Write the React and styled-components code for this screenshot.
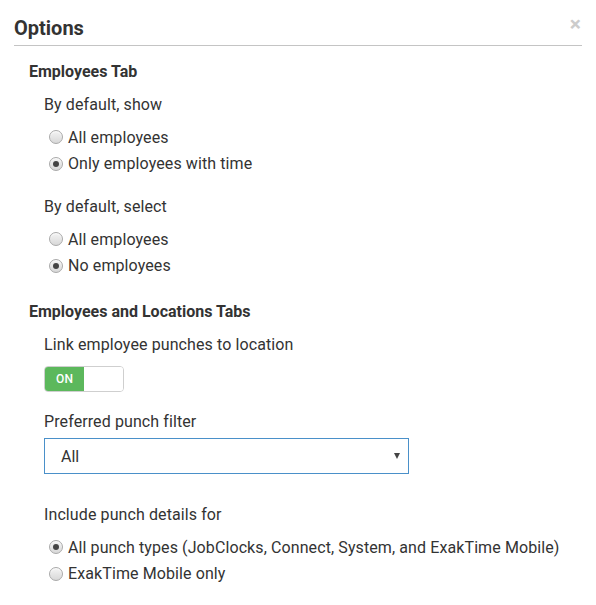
import React, { useState } from "react";
import styled, { createGlobalStyle } from "styled-components";

const GlobalStyle = createGlobalStyle`
  body {
    margin: 0;
    background: #fff;
    font-family: Roboto, "Liberation Sans", Arial, sans-serif;
    color: #333;
  }
`;

export default function App() {
  const [show, setShow] = useState("time");
  const [select, setSelect] = useState("none");
  const [details, setDetails] = useState("all");
  const [link, setLink] = useState(true);

  return (
    <>
      <GlobalStyle />
      <Modal>
        <Header>
          <Title>Options</Title>
          <Close aria-label="Close">×</Close>
        </Header>

        <SectionTitle>Employees Tab</SectionTitle>
        <Group>
          <Label>By default, show</Label>
          <RadioList>
            <RadioOption label="All employees" checked={show === "all"} onChange={() => setShow("all")} />
            <RadioOption label="Only employees with time" checked={show === "time"} onChange={() => setShow("time")} />
          </RadioList>
        </Group>
        <Group spaced>
          <Label>By default, select</Label>
          <RadioList>
            <RadioOption label="All employees" checked={select === "all"} onChange={() => setSelect("all")} />
            <RadioOption label="No employees" checked={select === "none"} onChange={() => setSelect("none")} />
          </RadioList>
        </Group>

        <SectionTitle spaced>Employees and Locations Tabs</SectionTitle>
        <Group>
          <Label>Link employee punches to location</Label>
          <Toggle onClick={() => setLink(!link)}>
            <ToggleOn $active={link}>{link ? "ON" : ""}</ToggleOn>
            <ToggleOff $active={!link}>{link ? "" : "OFF"}</ToggleOff>
          </Toggle>
        </Group>
        <Group spaced>
          <Label>Preferred punch filter</Label>
          <SelectBox>
            <span>All</span>
            <Caret />
          </SelectBox>
        </Group>
        <Group wide>
          <Label>Include punch details for</Label>
          <RadioList>
            <RadioOption
              label="All punch types (JobClocks, Connect, System, and ExakTime Mobile)"
              checked={details === "all"}
              onChange={() => setDetails("all")}
            />
            <RadioOption label="ExakTime Mobile only" checked={details === "mobile"} onChange={() => setDetails("mobile")} />
          </RadioList>
        </Group>
      </Modal>
    </>
  );
}

function RadioOption({ label, checked, onChange }) {
  return (
    <RadioRow onClick={onChange}>
      <RadioDot $checked={checked} />
      {label}
    </RadioRow>
  );
}

const Modal = styled.div`
  padding: 16px 14px 20px 14px;
  width: 568px;
`;

const Header = styled.div`
  display: flex;
  align-items: center;
  justify-content: space-between;
  border-bottom: 1px solid #c4c4c4;
  padding-bottom: 5px;
`;

const Title = styled.h2`
  margin: 0;
  font-size: 20px;
  font-weight: 700;
  line-height: 24px;
  color: #333;
`;

const Close = styled.span`
  font-size: 21px;
  font-weight: 700;
  line-height: 20px;
  color: #cccccc;
  margin-top: -9px;
  margin-right: 1px;
  cursor: pointer;
`;

const SectionTitle = styled.h3`
  margin: ${(p) => (p.spaced ? "23px" : "16px")} 0 0 15px;
  font-size: 16px;
  font-weight: 700;
  line-height: 20px;
`;

const Group = styled.div`
  margin: ${(p) => (p.wide ? "31px" : p.spaced ? "20px" : "13px")} 0 0 30px;
  display: flex;
  flex-direction: column;
  align-items: flex-start;
`;

const Label = styled.div`
  font-size: 16px;
  line-height: 20px;
  letter-spacing: 0.1px;
`;

const RadioList = styled.div`
  margin-top: 9px;
  display: flex;
  flex-direction: column;
`;

const RadioRow = styled.label`
  display: flex;
  align-items: center;
  gap: 5px;
  height: 26.5px;
  padding-left: 5px;
  font-size: 16px;
  letter-spacing: 0.1px;
  cursor: pointer;
`;

const RadioDot = styled.span`
  width: 12px;
  height: 12px;
  border-radius: 50%;
  border: 1px solid #a9a9a9;
  background: linear-gradient(#f4f4f4, #d8d8d8);
  box-shadow: inset 0 1px 1px rgba(255, 255, 255, 0.8);
  position: relative;
  flex: none;

  &::after {
    content: "";
    display: ${(p) => (p.$checked ? "block" : "none")};
    position: absolute;
    left: 3px;
    top: 3px;
    width: 6px;
    height: 6px;
    border-radius: 50%;
    background: #444;
  }
`;

const Toggle = styled.div`
  margin-top: 11px;
  display: flex;
  width: 78px;
  height: 24px;
  border: 1px solid #cfcfcf;
  border-radius: 4px;
  overflow: hidden;
  cursor: pointer;
`;

const ToggleOn = styled.span`
  width: 39px;
  display: flex;
  align-items: center;
  justify-content: center;
  font-size: 12px;
  font-weight: 500;
  color: #fff;
  background: ${(p) => (p.$active ? "#5cb85c" : "#fff")};
`;

const ToggleOff = styled.span`
  flex: 1;
  display: flex;
  align-items: center;
  justify-content: center;
  font-size: 12px;
  color: #555;
  background: ${(p) => (p.$active ? "#e6e6e6" : "#fff")};
`;

const SelectBox = styled.div`
  margin-top: 6px;
  box-sizing: border-box;
  width: 365px;
  height: 36px;
  border: 1px solid #4a90c9;
  display: flex;
  align-items: center;
  justify-content: space-between;
  padding: 0 8px 0 16px;
  font-size: 16px;
  color: #333;
`;

const Caret = styled.span`
  width: 0;
  height: 0;
  border-left: 3.5px solid transparent;
  border-right: 3.5px solid transparent;
  border-top: 6px solid #444;
`;
